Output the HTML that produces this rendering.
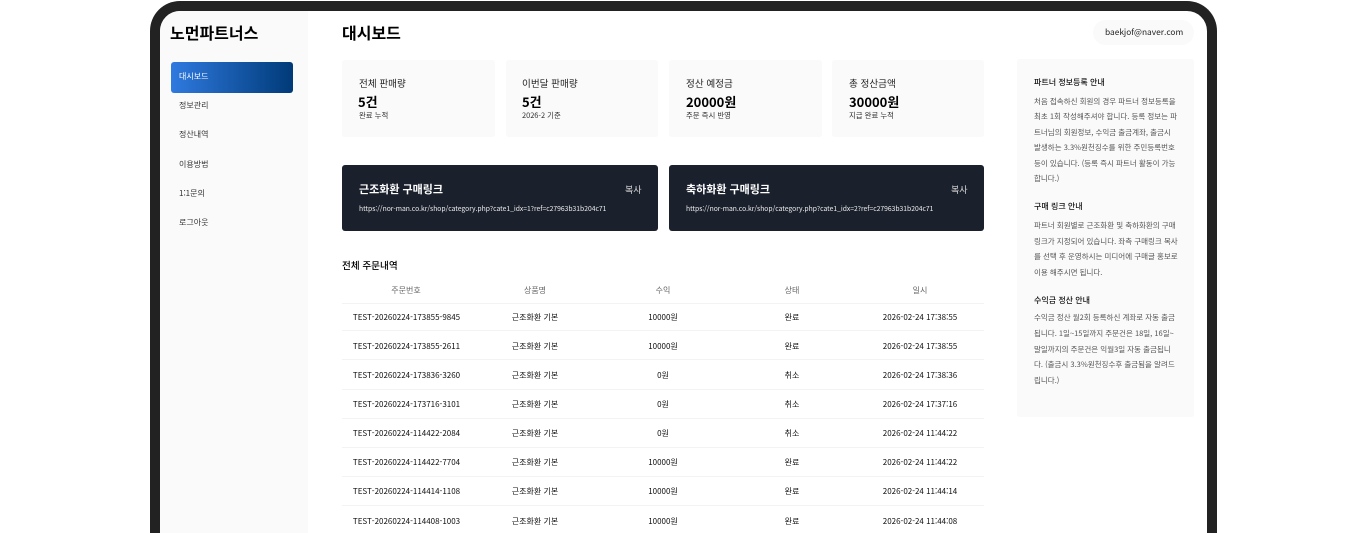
<!DOCTYPE html>
<html lang="ko"><head><meta charset="utf-8"><title>대시보드</title>
<style>
*{box-sizing:border-box;margin:0;padding:0}
html,body{width:1367px;height:533px;overflow:hidden;background:#fff}
body{color:#111;position:relative}
body,div,span{font-family:"Noto Sans CJK KR","Liberation Sans",sans-serif}
.a{position:absolute;white-space:nowrap;line-height:1}
#frame{position:absolute;left:150px;top:1px;width:1067px;height:532px;border:10px solid #222;border-bottom:0;border-radius:30px 30px 0 0;background:#fff;overflow:hidden}
#side{position:absolute;left:160px;top:11px;width:148px;height:522px;background:#fafafa;border-top-left-radius:20px}
#active{position:absolute;left:171px;top:62px;width:122px;height:31px;border-radius:3px;background:linear-gradient(90deg,#2f7ae0,#003a78)}
.m{font-size:8px;color:#333;left:179px}
.card{position:absolute;top:60px;height:77px;background:#fafafa;border-radius:3px}
.l{font-size:9.6px;color:#222;top:79px}.v{font-size:13px;font-weight:700;color:#000;top:95px}.s{font-size:7.4px;color:#333;top:112px}
.dark{position:absolute;top:165px;height:66px;background:#1a202c;border-radius:3px}
.dt{font-size:11px;font-weight:700;color:#fff;top:184px}.dc{font-size:9px;color:#ddd;top:185px}.du{font-size:6.75px;color:#eee;top:205px}
.line{position:absolute;left:342px;width:642px;height:1px;background:#f3f3f3}
.c{transform:translateX(-50%);font-size:8px;color:#111}
.h{color:#666;top:287px}
#panel{position:absolute;left:1017px;top:59px;width:177px;height:358px;background:#fafafa;border-radius:3px}
.pt{font-size:8px;font-weight:500;color:#111;left:1034px}
.pb{font-size:7.5px;color:#555;left:1034px}
</style></head><body>
<div id="frame"></div>
<div id="side"></div>
<div class="a" style="left:170px;top:24px;font-size:16px;font-weight:700;color:#000">노먼파트너스</div>
<div id="active"></div>
<div class="a m" style="top:73px;color:#fff">대시보드</div>
<div class="a m" style="top:102px">정보관리</div>
<div class="a m" style="top:131px">정산내역</div>
<div class="a m" style="top:161px">이용방법</div>
<div class="a m" style="top:190px">1:1문의</div>
<div class="a m" style="top:219px">로그아웃</div>
<div class="a" style="left:342px;top:24px;font-size:16px;font-weight:700;color:#000">대시보드</div>
<div style="position:absolute;left:1093px;top:20px;width:101px;height:25px;background:#fafafa;border-radius:13px"></div>
<div class="a" style="left:1105px;top:28px;font-size:8.4px;color:#222">baekjof@naver.com</div>

<div class="card" style="left:342px;width:153px"></div>
<div class="card" style="left:506px;width:152px"></div>
<div class="card" style="left:669px;width:153px"></div>
<div class="card" style="left:832px;width:152px"></div>
<div class="a l" style="left:359px">전체 판매량</div><div class="a v" style="left:358px">5건</div><div class="a s" style="left:359px">완료 누적</div>
<div class="a l" style="left:522px">이번달 판매량</div><div class="a v" style="left:522px">5건</div><div class="a s" style="left:522px">2026-2 기준</div>
<div class="a l" style="left:686px">정산 예정금</div><div class="a v" style="left:686px">20000원</div><div class="a s" style="left:686px">주문 즉시 반영</div>
<div class="a l" style="left:849px">총 정산금액</div><div class="a v" style="left:849px">30000원</div><div class="a s" style="left:849px">지급 완료 누적</div>

<div class="dark" style="left:342px;width:316px"></div>
<div class="dark" style="left:669px;width:315px"></div>
<div class="a dt" style="left:359px">근조화환 구매링크</div><div class="a dc" style="left:625px">복사</div>
<div class="a du" style="left:359px">https://nor-man.co.kr/shop/category.php?cate1_idx=1?ref=c27963b31b204c71</div>
<div class="a dt" style="left:686px">축하화환 구매링크</div><div class="a dc" style="left:951px">복사</div>
<div class="a du" style="left:686px">https://nor-man.co.kr/shop/category.php?cate1_idx=2?ref=c27963b31b204c71</div>

<div class="a" style="left:342px;top:261px;font-size:9.6px;font-weight:500;color:#000">전체 주문내역</div>
<div class="a c h" style="left:406px">주문번호</div><div class="a c h" style="left:535px">상품명</div><div class="a c h" style="left:663px">수익</div><div class="a c h" style="left:792px">상태</div><div class="a c h" style="left:920px">일시</div>
<div class="line" style="top:303px"></div><div class="line" style="top:330px"></div><div class="line" style="top:359px"></div><div class="line" style="top:389px"></div><div class="line" style="top:418px"></div><div class="line" style="top:447px"></div><div class="line" style="top:476px"></div><div class="line" style="top:505px"></div>

<div class="a c" style="left:406.5px;top:314px">TEST-20260224-173855-9845</div><div class="a c" style="left:535px;top:314px">근조화환 기본</div><div class="a c" style="left:663px;top:314px">10000원</div><div class="a c" style="left:792px;top:314px">완료</div><div class="a c" style="left:920px;top:314px">2026-02-24 17:38:55</div>
<div class="a c" style="left:406.5px;top:343px">TEST-20260224-173855-2611</div><div class="a c" style="left:535px;top:343px">근조화환 기본</div><div class="a c" style="left:663px;top:343px">10000원</div><div class="a c" style="left:792px;top:343px">완료</div><div class="a c" style="left:920px;top:343px">2026-02-24 17:38:55</div>
<div class="a c" style="left:406.5px;top:372px">TEST-20260224-173836-3260</div><div class="a c" style="left:535px;top:372px">근조화환 기본</div><div class="a c" style="left:663px;top:372px">0원</div><div class="a c" style="left:792px;top:372px">취소</div><div class="a c" style="left:920px;top:372px">2026-02-24 17:38:36</div>
<div class="a c" style="left:406.5px;top:401px">TEST-20260224-173716-3101</div><div class="a c" style="left:535px;top:401px">근조화환 기본</div><div class="a c" style="left:663px;top:401px">0원</div><div class="a c" style="left:792px;top:401px">취소</div><div class="a c" style="left:920px;top:401px">2026-02-24 17:37:16</div>
<div class="a c" style="left:406.5px;top:430px">TEST-20260224-114422-2084</div><div class="a c" style="left:535px;top:430px">근조화환 기본</div><div class="a c" style="left:663px;top:430px">0원</div><div class="a c" style="left:792px;top:430px">취소</div><div class="a c" style="left:920px;top:430px">2026-02-24 11:44:22</div>
<div class="a c" style="left:406.5px;top:459px">TEST-20260224-114422-7704</div><div class="a c" style="left:535px;top:459px">근조화환 기본</div><div class="a c" style="left:663px;top:459px">10000원</div><div class="a c" style="left:792px;top:459px">완료</div><div class="a c" style="left:920px;top:459px">2026-02-24 11:44:22</div>
<div class="a c" style="left:406.5px;top:488px">TEST-20260224-114414-1108</div><div class="a c" style="left:535px;top:488px">근조화환 기본</div><div class="a c" style="left:663px;top:488px">10000원</div><div class="a c" style="left:792px;top:488px">완료</div><div class="a c" style="left:920px;top:488px">2026-02-24 11:44:14</div>
<div class="a c" style="left:406.5px;top:518px">TEST-20260224-114408-1003</div><div class="a c" style="left:535px;top:518px">근조화환 기본</div><div class="a c" style="left:663px;top:518px">10000원</div><div class="a c" style="left:792px;top:518px">완료</div><div class="a c" style="left:920px;top:518px">2026-02-24 11:44:08</div>

<div id="panel"></div>
<div class="a pt" style="top:79px">파트너 정보등록 안내</div>
<div class="a pb" style="top:98px">처음 접속하신 회원의 경우 파트너 정보등록을</div>
<div class="a pb" style="top:113px">최초 1회 작성해주셔야 합니다. 등록 정보는 파</div>
<div class="a pb" style="top:129px">트너님의 회원정보, 수익금 출금계좌, 출금시</div>
<div class="a pb" style="top:144px">발생하는 3.3%원천징수를 위한 주민등록번호</div>
<div class="a pb" style="top:160px">등이 있습니다. (등록 즉시 파트너 활동이 가능</div>
<div class="a pb" style="top:175px">합니다.)</div>
<div class="a pt" style="top:203px">구매 링크 안내</div>
<div class="a pb" style="top:222px">파트너 회원별로 근조화환 및 축하화환의 구매</div>
<div class="a pb" style="top:238px">링크가 지정되어 있습니다. 좌측 구매링크 복사</div>
<div class="a pb" style="top:253px">를 선택 후 운영하시는 미디어에 구매글 홍보로</div>
<div class="a pb" style="top:269px">이용 해주시면 됩니다.</div>
<div class="a pt" style="top:297px">수익금 정산 안내</div>
<div class="a pb" style="top:314px">수익금 정산 월2회 등록하신 계좌로 자동 출금</div>
<div class="a pb" style="top:330px">됩니다. 1일~15일까지 주문건은 18일, 16일~</div>
<div class="a pb" style="top:346px">말일까지의 주문건은 익월3일 자동 출금됩니</div>
<div class="a pb" style="top:361px">다. (출금시 3.3%원천징수후 출금됨을 알려드</div>
<div class="a pb" style="top:377px">립니다.)</div>
</body></html>
